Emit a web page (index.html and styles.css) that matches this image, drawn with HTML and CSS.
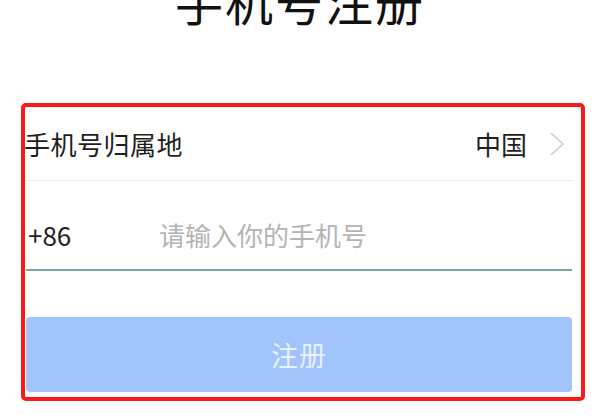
FILE: index.html
```html
<!DOCTYPE html>
<html lang="zh-CN">
<head>
<meta charset="utf-8">
<title>手机号注册</title>
<link rel="stylesheet" href="styles.css">
</head>
<body>
<h1 class="page-title">手机号注册</h1>
<div class="reg-box">
	<div class="reg-row area-row">
		<span class="label">手机号归属地</span>
		<span class="area">
			<span class="area-name">中国</span>
			<svg class="chevron" width="14" height="24" viewBox="0 0 14 24">
				<polyline points="1,1 13,12 1,23" fill="none" stroke="#c9c9c9" stroke-width="1.5"/>
			</svg>
		</span>
	</div>
	<div class="reg-row phone-row">
		<span class="prefix">+86</span>
		<input class="phone-input" type="tel" placeholder="请输入你的手机号">
	</div>
	<button class="btn-submit" type="button">注册</button>
</div>
</body>
</html>
```

FILE: styles.css
```css
* {
	margin: 0;
	padding: 0;
	box-sizing: border-box;
}
body {
	width: 600px;
	height: 420px;
	overflow: hidden;
	background: #fff;
	font-family: "Noto Sans CJK SC", "Noto Sans", sans-serif;
	color: #1e1e1e;
}
.page-title {
	margin-top: -24px;
	height: 48px;
	font-size: 48px;
	line-height: 48px;
	font-weight: 400;
	letter-spacing: 2px;
	text-align: center;
	color: #111;
}
.reg-box {
	margin: 79px 0 0 21px;
	width: 564px;
	height: 298px;
	padding: 0 9px 4px 0;
	border: 4px solid #fb1a1a;
	border-radius: 5px;
}
.reg-row {
	display: flex;
	align-items: center;
	margin-left: 1px;
	font-size: 26px;
	line-height: 36px;
}
.area-row {
	justify-content: space-between;
	padding: 19px 8px 18px 0;
	border-bottom: 1px solid #ececec;
}
.area-row .label {
	margin-left: -2px;
	letter-spacing: 0.5px;
}
.area {
	display: flex;
	align-items: center;
}
.area-name {
	margin-right: 23px;
}
.chevron {
	display: block;
}
.phone-row {
	padding: 36px 0 16px 0;
	border-bottom: 2px solid #7ea5a6;
}
.prefix {
	width: 133px;
	padding-left: 2px;
}
.phone-input {
	flex: 1;
	border: 0;
	outline: 0;
	background: transparent;
	font: inherit;
	color: #1e1e1e;
}
.phone-input::placeholder {
	color: #b4b4b4;
}
.btn-submit {
	display: block;
	width: 546px;
	height: 75px;
	margin: 46px 0 0 1px;
	border: 0;
	border-radius: 4px;
	background: #a1c5fb;
	color: #e8f1fe;
	font-family: "Noto Sans CJK SC", "Noto Sans", sans-serif;
	font-size: 27px;
	letter-spacing: 1px;
}
```
